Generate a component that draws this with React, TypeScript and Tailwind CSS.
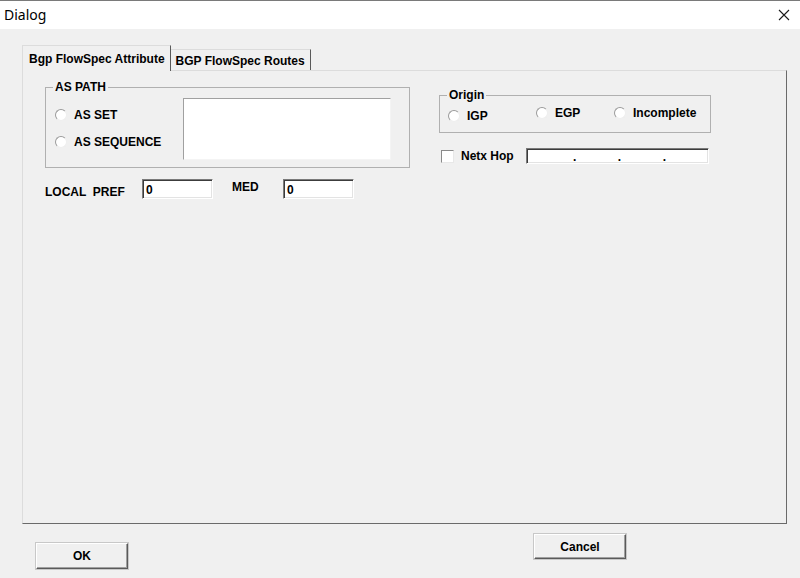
import React from 'react';

const ui = "font-['Liberation_Sans',Arial,sans-serif] font-bold text-[12px] leading-[14px] text-black";
const sunken =
  'bg-white border border-t-[#7a7a7a] border-l-[#7a7a7a] border-r-white border-b-white shadow-[inset_1px_1px_0_#3c3c3c,inset_-1px_-1px_0_#e3e3e3]';
const raised =
  'bg-[#f0f0f0] border border-t-white border-l-white border-r-[#5a5a5a] border-b-[#5a5a5a] shadow-[inset_-1px_-1px_0_#a0a0a0,0_0_0_1px_#c8c8c8]';

function Radio({ label, className = '' }: { label: string; className?: string }) {
  return (
    <label className={`flex items-center gap-[7px] ${className}`}>
      <span className="h-[12px] w-[12px] shrink-0 rounded-full border border-t-[#9a9a9a] border-l-[#9a9a9a] border-r-[#eeeeee] border-b-[#eeeeee] bg-white" />
      <span>{label}</span>
    </label>
  );
}

function Group({ title, className = '', children }: { title: string; className?: string; children: React.ReactNode }) {
  return (
    <fieldset className={`border border-[#b0b0b0] pl-[7px] ${className}`}>
      <legend className="px-[2px]">{title}</legend>
      {children}
    </fieldset>
  );
}

function CloseIcon() {
  return (
    <svg width="12" height="12" viewBox="0 0 12 12" className="text-[#1a1a1a]">
      <path d="M1 1L11 11M11 1L1 11" stroke="currentColor" strokeWidth="1.1" fill="none" />
    </svg>
  );
}

export default function App() {
  return (
    <div className={`h-[578px] w-[800px] overflow-hidden bg-[#f0f0f0] ${ui}`}>
      {/* caption */}
      <div className="flex h-[29px] items-center justify-between border-t border-[#7a7a7a] bg-white pl-[4px] pr-[10px]">
        <span className="font-['Noto_Sans',sans-serif] text-[14px] font-normal">Dialog</span>
        <CloseIcon />
      </div>

      {/* tab strip */}
      <div className="flex items-end pl-[22px] pt-[16px]">
        <div className="relative z-10 -mb-px flex h-[26px] items-start border-l border-t border-r border-l-[#dcdcdc] border-t-[#dcdcdc] border-r-[#5a5a5a] bg-[#f0f0f0] pl-[6px] pr-[5px] pt-[6px]">
          Bgp FlowSpec Attribute
        </div>
        <div className="flex h-[21px] items-start border-t border-r border-t-[#dcdcdc] border-r-[#5a5a5a] pl-[5px] pr-[5px] pt-[4px]">
          BGP FlowSpec Routes
        </div>
      </div>

      {/* tab page */}
      <div className="ml-[22px] h-[454px] w-[765px] border border-t-[#dcdcdc] border-l-[#dcdcdc] border-r-[#6a6a6a] border-b-[#6a6a6a] pl-[22px] pt-[9px]">
        <div className="flex gap-[29px]">
          <div className="w-[365px]">
            <Group title="AS PATH" className="pb-[7px] pr-[18px]">
              <div className="mt-[4px] flex">
                <div className="ml-[2px] w-[128px] pt-[10px]">
                  <Radio label="AS SET" />
                  <Radio label="AS SEQUENCE" className="mt-[13px]" />
                </div>
                <div className="h-[62px] w-[208px] bg-white border border-t-[#a0a0a0] border-l-[#a0a0a0] border-r-[#f4f4f4] border-b-[#f4f4f4]" />
              </div>
            </Group>

            <div className="mt-[11px] flex items-start">
              <span className="mt-[6px] w-[97px] whitespace-pre">LOCAL  PREF</span>
              <div className={`h-[20px] w-[71px] pl-[3px] pt-[3px] ${sunken}`}>0</div>
              <span className="ml-[19px] mt-[1px] w-[51px]">MED</span>
              <div className={`h-[20px] w-[71px] pl-[3px] pt-[3px] ${sunken}`}>0</div>
            </div>
          </div>

          <div className="w-[272px] pt-[8px]">
            <Group title="Origin" className="pb-[9px]">
              <div className="flex items-start">
                <Radio label="IGP" className="ml-[1px] mt-[7px] w-[88px]" />
                <Radio label="EGP" className="mt-[4px] w-[78px]" />
                <Radio label="Incomplete" className="mt-[4px]" />
              </div>
            </Group>

            <div className="mt-[15px] flex items-center">
              <span className="ml-[2px] h-[13px] w-[13px] border border-t-[#8a8a8a] border-l-[#8a8a8a] border-r-[#e8e8e8] border-b-[#e8e8e8] bg-white" />
              <span className="ml-[7px] w-[65px]">Netx Hop</span>
              <div className={`flex h-[16px] w-[183px] items-end justify-between pl-[46px] pr-[42px] pb-[1px] leading-[10px] ${sunken}`}>
                <span>.</span>
                <span>.</span>
                <span>.</span>
              </div>
            </div>
          </div>
        </div>
      </div>

      {/* dialog buttons */}
      <div className="flex items-start pl-[36px]">
        <button className={`mt-[19px] flex h-[26px] w-[92px] items-center justify-center ${raised}`}>OK</button>
        <button className={`ml-[406px] mt-[10px] flex h-[25px] w-[92px] items-center justify-center ${raised}`}>Cancel</button>
      </div>
    </div>
  );
}
